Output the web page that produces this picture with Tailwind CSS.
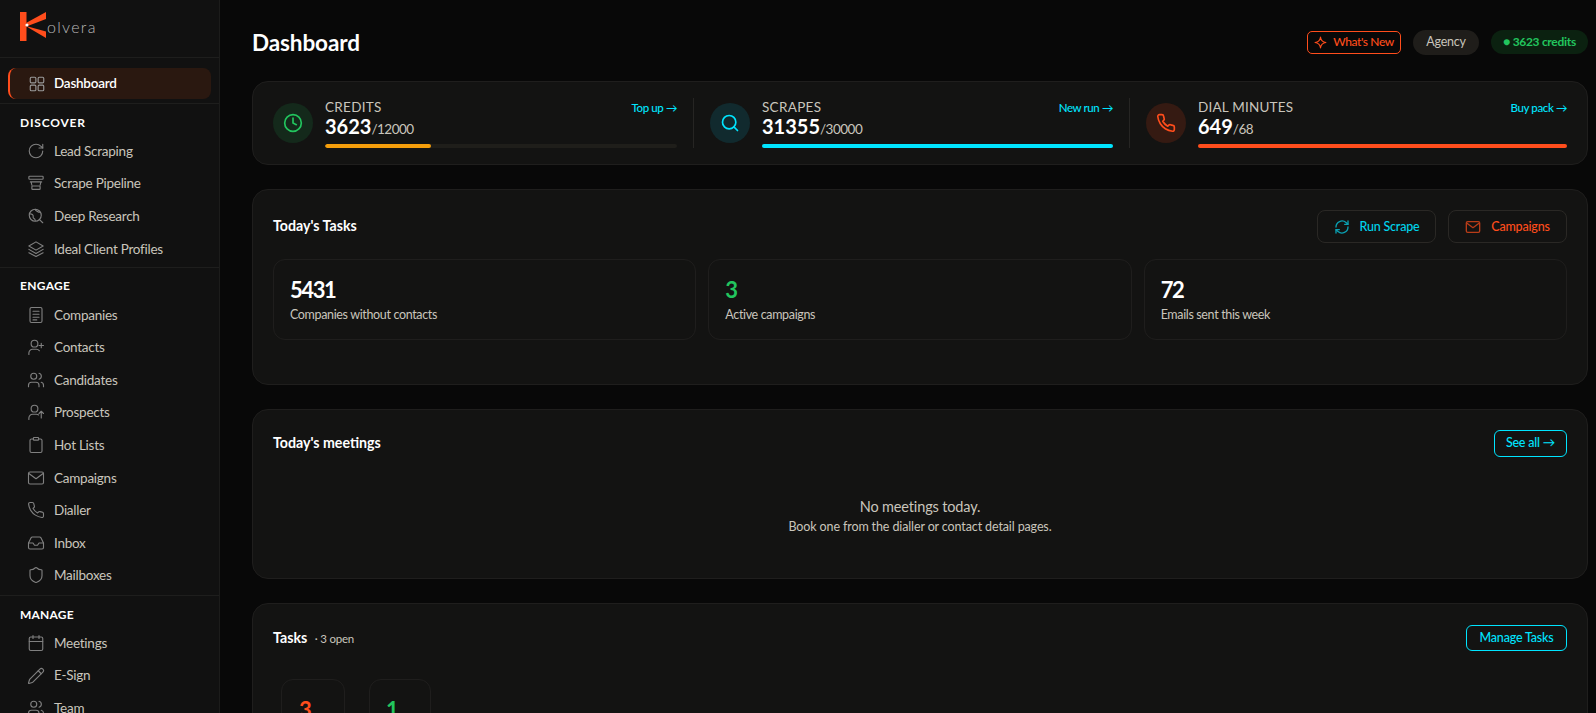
<!DOCTYPE html>
<html lang="en">
  <head>
    <meta charset="UTF-8" />
    <title>Kolvera Dashboard</title>
    <script src="https://cdn.jsdelivr.net/npm/@tailwindcss/browser@4"></script>
  </head>
  <body class="bg-[#080808] text-white font-['Lato',sans-serif] h-[713px] overflow-hidden flex">
    <!-- sidebar -->
    <aside class="w-[220px] h-[713px] shrink-0 bg-[#111111] border-r border-[#1c1c1b] overflow-hidden text-[13.5px] tracking-[-0.25px] text-[#c9c5bc]">
      <div class="h-[58px] border-b border-[#1e1e1d] pl-5 pt-3 flex items-start">
        <svg width="28" height="30" viewBox="0 0 28 30" class="shrink-0">
          <rect x="0" y="0" width="6.5" height="29" fill="#ff4d1c" />
          <path d="M6 11 L26 0 V7 L9 13.5 Z" fill="#ff4d1c" />
          <path d="M6 14 L26 19.5 V26 L9 16 Z" fill="#ff4d1c" />
          <circle cx="7" cy="13" r="1.6" fill="#fff" />
        </svg>
        <span class="-ml-[1px] mt-[3px] text-[16px] font-light tracking-[1.3px] text-[#b9b9b9]">olvera</span>
      </div>
      <div class="border-b border-[#1e1e1d] pt-[10px] pb-[4px] pl-2 pr-2">
        <div class="h-[31px] flex items-center gap-[8px] pl-[18px] rounded-lg border-l-2 border-[#ff4d1c] bg-[#2a1810] text-white font-semibold">
          <svg class="w-[18px] h-[18px] shrink-0 text-[#9a9a9a]" viewBox="0 0 24 24" fill="none" stroke="currentColor" stroke-width="1.5"><rect x="3" y="3" width="7.5" height="7.5" rx="1.5"/><rect x="13.5" y="3" width="7.5" height="7.5" rx="1.5"/><rect x="3" y="13.5" width="7.5" height="7.5" rx="1.5"/><rect x="13.5" y="13.5" width="7.5" height="7.5" rx="1.5"/></svg>
          Dashboard
        </div>
      </div>

      <div class="border-b border-[#1e1e1d] pt-[10px] pb-[2px]">
        <div class="h-[18px] pl-5 flex items-center text-[12px] font-bold tracking-[0.8px] text-white mb-[3px]">DISCOVER</div>
        <div class="h-[32.6px] flex items-center gap-[9px] pl-[27px]">
          <svg class="w-[18px] h-[18px] shrink-0 text-[#808080]" viewBox="0 0 24 24" fill="none" stroke="currentColor" stroke-width="1.5" stroke-linecap="round" stroke-linejoin="round"><path d="M21 12a9 9 0 1 1-9-9c2.52 0 4.93 1 6.74 2.74L21 8"/><path d="M21 3v5h-5"/></svg>
          Lead Scraping
        </div>
        <div class="h-[32.6px] flex items-center gap-[9px] pl-[27px] -mt-[1px]">
          <svg class="w-[18px] h-[18px] shrink-0 text-[#808080]" viewBox="0 0 24 24" fill="none" stroke="currentColor" stroke-width="1.5" stroke-linecap="round" stroke-linejoin="round"><rect x="2.5" y="3" width="19" height="4" rx="1"/><path d="M4.5 10.5h15M5.5 10.5 6.5 15M18.5 10.5 17.5 15"/><rect x="6.5" y="16" width="11" height="4.5" rx="1"/></svg>
          Scrape Pipeline
        </div>
        <div class="h-[32.6px] flex items-center gap-[9px] pl-[27px] mt-[1px]">
          <svg class="w-[18px] h-[18px] shrink-0 text-[#808080]" viewBox="0 0 24 24" fill="none" stroke="currentColor" stroke-width="1.5" stroke-linecap="round" stroke-linejoin="round"><circle cx="11" cy="11" r="8"/><path d="m21 21-4.3-4.3"/><path d="M4 9c2 1 3 0 4 2s-1 3 1 4 2 2 2 3M11 3c0 2 2 2 3 3s3 1 4 1"/></svg>
          Deep Research
        </div>
        <div class="h-[32.6px] flex items-center gap-[9px] pl-[27px]">
          <svg class="w-[18px] h-[18px] shrink-0 text-[#808080]" viewBox="0 0 24 24" fill="none" stroke="currentColor" stroke-width="1.5" stroke-linecap="round" stroke-linejoin="round"><path d="M12 2.5 2.5 8 12 13.5 21.5 8Z"/><path d="m2.5 12.5 9.5 5.5 9.5-5.5"/><path d="m2.5 17 9.5 5 9.5-5"/></svg>
          Ideal Client Profiles
        </div>
      </div>

      <div class="border-b border-[#1e1e1d] pt-[9px] pb-[3px]">
        <div class="h-[18px] pl-5 flex items-center text-[12px] font-bold tracking-[0.3px] text-white mb-[3px]">ENGAGE</div>
        <div class="h-[32.6px] flex items-center gap-[9px] pl-[27px]">
          <svg class="w-[18px] h-[18px] shrink-0 text-[#808080]" viewBox="0 0 24 24" fill="none" stroke="currentColor" stroke-width="1.5" stroke-linecap="round" stroke-linejoin="round"><rect x="4" y="2" width="16" height="20" rx="2"/><path d="M8 7h8M8 11h8M8 15h8M8 18.5h5"/></svg>
          Companies
        </div>
        <div class="h-[32.6px] flex items-center gap-[9px] pl-[27px]">
          <svg class="w-[18px] h-[18px] shrink-0 text-[#808080]" viewBox="0 0 24 24" fill="none" stroke="currentColor" stroke-width="1.5" stroke-linecap="round" stroke-linejoin="round"><circle cx="10" cy="7.5" r="4.5"/><path d="M2.5 22v-2a5 5 0 0 1 5-5h5a5 5 0 0 1 4 2"/><path d="M19 7v6M16 10h6"/></svg>
          Contacts
        </div>
        <div class="h-[32.6px] flex items-center gap-[9px] pl-[27px]">
          <svg class="w-[18px] h-[18px] shrink-0 text-[#808080]" viewBox="0 0 24 24" fill="none" stroke="currentColor" stroke-width="1.5" stroke-linecap="round" stroke-linejoin="round"><circle cx="9" cy="7" r="4"/><path d="M2 21v-2a4 4 0 0 1 4-4h6a4 4 0 0 1 4 4v2"/><path d="M16 3.1a4 4 0 0 1 0 7.8"/><path d="M22 21v-2a4 4 0 0 0-3-3.9"/></svg>
          Candidates
        </div>
        <div class="h-[32.6px] flex items-center gap-[9px] pl-[27px]">
          <svg class="w-[18px] h-[18px] shrink-0 text-[#808080]" viewBox="0 0 24 24" fill="none" stroke="currentColor" stroke-width="1.5" stroke-linecap="round" stroke-linejoin="round"><circle cx="10" cy="7.5" r="4.5"/><path d="M2.5 22v-2a5 5 0 0 1 5-5h5a5 5 0 0 1 3 1"/><path d="M19 20v-9M16 14l3-3 3 3"/></svg>
          Prospects
        </div>
        <div class="h-[32.6px] flex items-center gap-[9px] pl-[27px]">
          <svg class="w-[18px] h-[18px] shrink-0 text-[#808080]" viewBox="0 0 24 24" fill="none" stroke="currentColor" stroke-width="1.5" stroke-linecap="round" stroke-linejoin="round"><rect x="8.5" y="2" width="7" height="3.5" rx="1"/><path d="M15.5 4H18a2 2 0 0 1 2 2v14a2 2 0 0 1-2 2H6a2 2 0 0 1-2-2V6a2 2 0 0 1 2-2h2.5"/></svg>
          Hot Lists
        </div>
        <div class="h-[32.6px] flex items-center gap-[9px] pl-[27px]">
          <svg class="w-[18px] h-[18px] shrink-0 text-[#808080]" viewBox="0 0 24 24" fill="none" stroke="currentColor" stroke-width="1.5" stroke-linecap="round" stroke-linejoin="round"><rect x="2" y="4" width="20" height="16" rx="2"/><path d="m2.5 6 9.5 7 9.5-7"/></svg>
          Campaigns
        </div>
        <div class="h-[32.6px] flex items-center gap-[9px] pl-[27px]">
          <svg class="w-[18px] h-[18px] shrink-0 text-[#808080]" viewBox="0 0 24 24" fill="none" stroke="currentColor" stroke-width="1.5" stroke-linecap="round" stroke-linejoin="round"><path d="M22 16.92v3a2 2 0 0 1-2.18 2 19.79 19.79 0 0 1-8.63-3.07 19.5 19.5 0 0 1-6-6 19.79 19.79 0 0 1-3.07-8.67A2 2 0 0 1 4.11 2h3a2 2 0 0 1 2 1.72c.13.96.36 1.9.7 2.81a2 2 0 0 1-.45 2.11L8.09 9.91a16 16 0 0 0 6 6l1.27-1.27a2 2 0 0 1 2.11-.45c.91.34 1.85.57 2.81.7A2 2 0 0 1 22 16.92z"/></svg>
          Dialler
        </div>
        <div class="h-[32.6px] flex items-center gap-[9px] pl-[27px]">
          <svg class="w-[18px] h-[18px] shrink-0 text-[#808080]" viewBox="0 0 24 24" fill="none" stroke="currentColor" stroke-width="1.5" stroke-linecap="round" stroke-linejoin="round"><path d="M22 12h-6l-2 3h-4l-2-3H2"/><path d="M5.45 5.11 2 12v6a2 2 0 0 0 2 2h16a2 2 0 0 0 2-2v-6l-3.45-6.89A2 2 0 0 0 16.76 4H7.24a2 2 0 0 0-1.79 1.11z"/></svg>
          Inbox
        </div>
        <div class="h-[32.6px] flex items-center gap-[9px] pl-[27px]">
          <svg class="w-[18px] h-[18px] shrink-0 text-[#808080]" viewBox="0 0 24 24" fill="none" stroke="currentColor" stroke-width="1.5" stroke-linecap="round" stroke-linejoin="round"><path d="M20 13c0 5-3.5 7.5-7.66 8.95a1 1 0 0 1-.67-.01C7.5 20.5 4 18 4 13V6a1 1 0 0 1 1-1c2 0 4.5-1.2 6.24-2.72a1.17 1.17 0 0 1 1.52 0C14.51 3.81 17 5 19 5a1 1 0 0 1 1 1z"/></svg>
          Mailboxes
        </div>
      </div>

      <div class="pt-[10px]">
        <div class="h-[18px] pl-5 flex items-center text-[12px] font-bold tracking-[0.2px] text-white mb-[3px]">MANAGE</div>
        <div class="h-[32.6px] flex items-center gap-[9px] pl-[27px]">
          <svg class="w-[18px] h-[18px] shrink-0 text-[#808080]" viewBox="0 0 24 24" fill="none" stroke="currentColor" stroke-width="1.5" stroke-linecap="round" stroke-linejoin="round"><rect x="3" y="4" width="18" height="18" rx="2"/><path d="M16 2v4M8 2v4M3 10h18"/></svg>
          Meetings
        </div>
        <div class="h-[32.6px] flex items-center gap-[9px] pl-[27px]">
          <svg class="w-[18px] h-[18px] shrink-0 text-[#808080]" viewBox="0 0 24 24" fill="none" stroke="currentColor" stroke-width="1.5" stroke-linecap="round" stroke-linejoin="round"><path d="M21.17 6.81a2.82 2.82 0 0 0-3.99-3.99L3.84 16.17a2 2 0 0 0-.5.83l-1.32 4.35a.5.5 0 0 0 .62.62l4.35-1.32a2 2 0 0 0 .83-.5z"/><path d="m15 5 4 4"/></svg>
          E-Sign
        </div>
        <div class="h-[32.6px] flex items-center gap-[9px] pl-[27px]">
          <svg class="w-[18px] h-[18px] shrink-0 text-[#808080]" viewBox="0 0 24 24" fill="none" stroke="currentColor" stroke-width="1.5" stroke-linecap="round" stroke-linejoin="round"><circle cx="9" cy="7" r="4"/><path d="M2 21v-2a4 4 0 0 1 4-4h6a4 4 0 0 1 4 4v2"/><path d="M16 3.1a4 4 0 0 1 0 7.8"/><path d="M22 21v-2a4 4 0 0 0-3-3.9"/></svg>
          Team
        </div>
      </div>
    </aside>

    <!-- main -->
    <main class="flex-1 min-w-0 pl-8 pr-2 pt-[27px] overflow-hidden">
      <header class="h-[30px] mb-6 flex items-center justify-between">
        <h1 class="mt-[2px] text-[22.5px] font-bold tracking-[-0.1px]">Dashboard</h1>
        <div class="flex items-center gap-3 text-[12.5px] tracking-[-0.2px]">
          <div class="w-[94px] h-[23px] flex items-center justify-center gap-[6px] rounded-[5px] border border-[#ff4d1c] text-[#ff4d1c] text-[12px] tracking-[-0.4px] font-medium">
            <svg class="w-[13px] h-[13px]" viewBox="0 0 24 24" fill="none" stroke="currentColor" stroke-width="2" stroke-linejoin="round"><path d="M12 2 C12.8 8 16 11.2 22 12 C16 12.8 12.8 16 12 22 C11.2 16 8 12.8 2 12 C8 11.2 11.2 8 12 2Z"/></svg>
            What's New
          </div>
          <div class="w-[66px] h-[25px] flex items-center justify-center rounded-full bg-[#1f1d1a] text-[#c9c5bc]">Agency</div>
          <div class="w-[97px] h-[24px] flex items-center justify-center rounded-full bg-[#0b2110] text-[#22c55e] text-[12px] tracking-[-0.3px] font-bold">● 3623 credits</div>
        </div>
      </header>

      <!-- usage -->
      <section class="h-[84px] rounded-2xl border border-[#1f1e1d] bg-[#131312] px-5 flex items-center mb-6">
        <div class="w-[421px] shrink-0 h-[50px] pr-4 border-r border-[#262523] flex items-center gap-3">
          <div class="w-10 h-10 shrink-0 rounded-full bg-[#14291b] flex items-center justify-center">
            <svg class="w-5 h-5 text-[#22c55e]" viewBox="0 0 24 24" fill="none" stroke="currentColor" stroke-width="2" stroke-linecap="round" stroke-linejoin="round"><circle cx="12" cy="12" r="10"/><path d="M12 6v6l4 2"/></svg>
          </div>
          <div class="flex-1 min-w-0 pt-[2px]">
            <div class="flex items-center justify-between h-[15px]">
              <span class="text-[13.5px] tracking-[0.3px] text-[#c9c5bc]">CREDITS</span>
              <span class="text-[11.5px] tracking-[-0.4px] text-[#00e5ff] font-medium">Top up →</span>
            </div>
            <div class="h-[24px] mt-[1px] flex items-baseline leading-none">
              <span class="text-[20px] font-bold">3623</span><span class="text-[13.5px] tracking-[-0.5px] text-[#c9c5bc]">/12000</span>
            </div>
            <div class="h-1 mt-[4px] rounded-full bg-[#1f1e1a] overflow-hidden"><div class="h-full bg-[#f59e0b] rounded-full" style="width: 30%"></div></div>
          </div>
        </div>
        <div class="w-[436px] shrink-0 h-[50px] pl-4 pr-4 border-r border-[#262523] flex items-center gap-3">
          <div class="w-10 h-10 shrink-0 rounded-full bg-[#112a2e] flex items-center justify-center">
            <svg class="w-5 h-5 text-[#00e5ff]" viewBox="0 0 24 24" fill="none" stroke="currentColor" stroke-width="2" stroke-linecap="round" stroke-linejoin="round"><circle cx="11" cy="11" r="8"/><path d="m21 21-4.3-4.3"/></svg>
          </div>
          <div class="flex-1 min-w-0 pt-[2px]">
            <div class="flex items-center justify-between h-[15px]">
              <span class="text-[13.5px] tracking-[0.3px] text-[#c9c5bc]">SCRAPES</span>
              <span class="text-[11.5px] tracking-[-0.4px] text-[#00e5ff] font-medium">New run →</span>
            </div>
            <div class="h-[24px] mt-[1px] flex items-baseline leading-none">
              <span class="text-[20px] font-bold">31355</span><span class="text-[13.5px] tracking-[-0.5px] text-[#c9c5bc]">/30000</span>
            </div>
            <div class="h-1 mt-[4px] rounded-full bg-[#00e5ff]"></div>
          </div>
        </div>
        <div class="flex-1 h-[50px] pl-4 flex items-center gap-3">
          <div class="w-10 h-10 shrink-0 rounded-full bg-[#351a12] flex items-center justify-center">
            <svg class="w-5 h-5 text-[#ff4d1c]" viewBox="0 0 24 24" fill="none" stroke="currentColor" stroke-width="2" stroke-linecap="round" stroke-linejoin="round"><path d="M22 16.92v3a2 2 0 0 1-2.18 2 19.79 19.79 0 0 1-8.63-3.07 19.5 19.5 0 0 1-6-6 19.79 19.79 0 0 1-3.07-8.67A2 2 0 0 1 4.11 2h3a2 2 0 0 1 2 1.72c.13.96.36 1.9.7 2.81a2 2 0 0 1-.45 2.11L8.09 9.91a16 16 0 0 0 6 6l1.27-1.27a2 2 0 0 1 2.11-.45c.91.34 1.85.57 2.81.7A2 2 0 0 1 22 16.92z"/></svg>
          </div>
          <div class="flex-1 min-w-0 pt-[2px]">
            <div class="flex items-center justify-between h-[15px]">
              <span class="text-[13.5px] tracking-[0.2px] text-[#c9c5bc]">DIAL MINUTES</span>
              <span class="text-[11.5px] tracking-[-0.4px] text-[#00e5ff] font-medium">Buy pack →</span>
            </div>
            <div class="h-[24px] mt-[1px] flex items-baseline leading-none">
              <span class="text-[20px] font-bold">649</span><span class="text-[13.5px] tracking-[-0.5px] text-[#c9c5bc]">/68</span>
            </div>
            <div class="h-1 mt-[4px] rounded-full bg-[#ff4d1c]"></div>
          </div>
        </div>
      </section>

      <!-- today's tasks -->
      <section class="h-[196px] rounded-2xl border border-[#1f1e1d] bg-[#131312] px-5 pt-5 mb-6">
        <div class="h-[33px] flex items-center justify-between mb-4">
          <h2 class="-mt-[2px] text-[14.2px] font-bold">Today's Tasks</h2>
          <div class="flex gap-3 text-[12.5px] tracking-[-0.2px] font-medium">
            <div class="w-[119px] h-[33px] flex items-center justify-center gap-[10px] rounded-lg border border-[#2a2825] text-[#00d4ec]">
              <svg class="w-4 h-4 text-[#0aa0b2]" viewBox="0 0 24 24" fill="none" stroke="currentColor" stroke-width="2" stroke-linecap="round" stroke-linejoin="round"><path d="M3 12a9 9 0 0 1 15-6.7L21 8"/><path d="M21 3v5h-5"/><path d="M21 12a9 9 0 0 1-15 6.7L3 16"/><path d="M8 16H3v5"/></svg>
              <span class="mt-[1px]">Run Scrape</span>
            </div>
            <div class="w-[119px] h-[33px] flex items-center justify-center gap-[10px] rounded-lg border border-[#2a2825] text-[#ff4d1c]">
              <svg class="w-4 h-4 text-[#b83c18]" viewBox="0 0 24 24" fill="none" stroke="currentColor" stroke-width="2" stroke-linecap="round" stroke-linejoin="round"><rect x="2" y="4" width="20" height="16" rx="2"/><path d="m2.5 6 9.5 7 9.5-7"/></svg>
              <span class="mt-[1px]">Campaigns</span>
            </div>
          </div>
        </div>
        <div class="grid grid-cols-3 gap-3">
          <div class="h-[81px] rounded-xl border border-[#1f1e1d] px-4 pt-[14px]">
            <div class="text-[22px] leading-[32px] font-bold tracking-[-1.4px]">5431</div>
            <div class="text-[12.5px] leading-[18px] tracking-[-0.35px] text-[#c9c5bc]">Companies without contacts</div>
          </div>
          <div class="h-[81px] rounded-xl border border-[#1f1e1d] px-4 pt-[14px]">
            <div class="text-[22px] leading-[32px] font-bold tracking-[-1.4px] text-[#22c55e]">3</div>
            <div class="text-[12.5px] leading-[18px] tracking-[-0.35px] text-[#c9c5bc]">Active campaigns</div>
          </div>
          <div class="h-[81px] rounded-xl border border-[#1f1e1d] px-4 pt-[14px]">
            <div class="text-[22px] leading-[32px] font-bold tracking-[-1.4px]">72</div>
            <div class="text-[12.5px] leading-[18px] tracking-[-0.35px] text-[#c9c5bc]">Emails sent this week</div>
          </div>
        </div>
      </section>

      <!-- meetings -->
      <section class="h-[170px] rounded-2xl border border-[#1f1e1d] bg-[#131312] px-5 pt-[19px] mb-6">
        <div class="h-[28px] flex items-center justify-between">
          <h2 class="text-[14.2px] font-bold">Today's meetings</h2>
          <div class="w-[73px] h-[27px] flex items-center justify-center rounded-md border border-[#00e5ff] text-[12.5px] tracking-[-0.2px] font-medium text-[#00e5ff]">See all →</div>
        </div>
        <div class="mt-[39px] text-center">
          <div class="text-[14.5px] leading-[22px] tracking-[-0.15px] text-[#c9c5bc]">No meetings today.</div>
          <div class="text-[12.5px] leading-[18px] tracking-[-0.12px] text-[#c9c5bc]">Book one from the dialler or contact detail pages.</div>
        </div>
      </section>

      <!-- tasks -->
      <section class="h-[200px] rounded-2xl border border-[#1f1e1d] bg-[#131312] px-5 pt-[21px]">
        <div class="h-[26px] flex items-center justify-between">
          <h2 class="text-[14.2px] font-bold">Tasks <span class="ml-1 text-[11.5px] tracking-[-0.2px] font-normal text-[#c9c5bc]">· 3 open</span></h2>
          <div class="w-[101px] h-[26px] flex items-center justify-center rounded-md border border-[#00e5ff] text-[12.5px] tracking-[-0.2px] font-medium text-[#00e5ff]">Manage Tasks</div>
        </div>
        <div class="mt-[28px] ml-2 flex gap-6">
          <div class="w-[64px] h-[80px] rounded-xl border border-[#1f1e1d] pl-[17px] pt-[14px] text-[22px] leading-[32px] font-bold text-[#ff4d1c]">3</div>
          <div class="w-[62px] h-[80px] rounded-xl border border-[#1f1e1d] pl-[16px] pt-[14px] text-[22px] leading-[32px] font-bold text-[#22c55e]">1</div>
        </div>
      </section>
    </main>
  </body>
</html>
